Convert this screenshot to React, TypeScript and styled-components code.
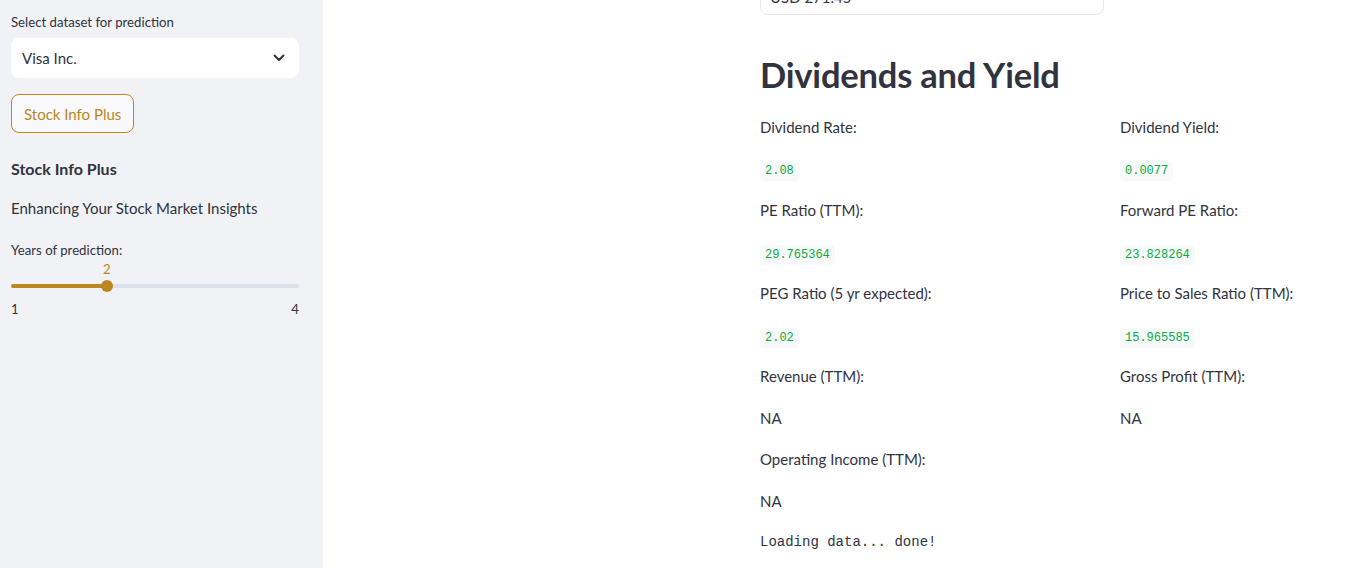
import React from "react";
import styled, { createGlobalStyle } from "styled-components";

const Global = createGlobalStyle`
  html, body { margin: 0; padding: 0; background: #ffffff; overflow: hidden; }
  body { font-family: "Lato", "Open Sans", sans-serif; color: rgb(49, 51, 63); }
  #root { height: 568px; }
`;

const GOLD = "rgb(186, 135, 33)";
const TEXT = "rgb(49, 51, 63)";

const Page = styled.div`
  display: flex;
  width: 1345px;
  height: 568px;
`;

const Sidebar = styled.aside`
  width: 323px;
  flex: none;
  background: rgb(240, 242, 246);
  padding: 11px 24px 0 11px;
  box-sizing: border-box;
  display: flex;
  flex-direction: column;
`;

const SmallLabel = styled.div`
  font-size: 13.2px;
  line-height: 22px;
  color: ${TEXT};
`;

const Select = styled.div`
  margin-top: 5px;
  height: 40px;
  background: #ffffff;
  border-radius: 8px;
  display: flex;
  align-items: center;
  justify-content: space-between;
  padding: 0 14px 0 11px;
  font-size: 15px;
  color: ${TEXT};
`;

const Button = styled.button`
  margin-top: 16px;
  align-self: flex-start;
  height: 39px;
  padding: 0 12px;
  border: 1px solid ${GOLD};
  border-radius: 8px;
  background: rgb(249, 249, 251);
  color: ${GOLD};
  font-family: inherit;
  font-size: 15px;
`;

const SideTitle = styled.div`
  margin-top: 22px;
  font-size: 16px;
  font-weight: 700;
  line-height: 28px;
  color: ${TEXT};
`;

const SideText = styled.div`
  margin-top: 12px;
  font-size: 15px;
  line-height: 26px;
  color: ${TEXT};
`;

const SliderBlock = styled.div`
  margin-top: 18px;
  display: flex;
  flex-direction: column;
`;

const SliderValue = styled.div<{ $pct: number }>`
  font-size: 13.2px;
  line-height: 18px;
  color: ${GOLD};
  padding-left: calc(${(p) => p.$pct}% - 4px);
  margin-top: -1px;
`;

const Track = styled.div`
  position: relative;
  height: 4px;
  margin-top: 6px;
  border-radius: 2px;
  background: rgb(220, 224, 232);
`;

const Fill = styled.div`
  position: absolute;
  left: 0;
  top: 0;
  height: 4px;
  border-radius: 2px;
  background: ${GOLD};
`;

const Thumb = styled.div`
  position: absolute;
  top: -4px;
  width: 12px;
  height: 12px;
  margin-left: -6px;
  border-radius: 50%;
  background: ${GOLD};
`;

const Ticks = styled.div`
  display: flex;
  justify-content: space-between;
  margin-top: 11px;
  font-size: 13.2px;
  line-height: 20px;
  color: ${TEXT};
`;

const Main = styled.main`
  flex: 1;
  padding-left: 437px;
  display: flex;
  flex-direction: column;
  overflow: hidden;
`;

const MetricBox = styled.div`
  width: 344px;
  height: 33px;
  margin-top: -18px;
  box-sizing: border-box;
  border: 1px solid rgb(230, 232, 236);
  border-radius: 8px;
  padding: 8px 9px;
  font-size: 15px;
  color: ${TEXT};
  line-height: 12px;
`;

const Heading = styled.h2`
  margin: 37px 0 16.5px 0;
  font-size: 34.5px;
  line-height: 46px;
  font-weight: 700;
  color: rgb(49, 51, 63);
  letter-spacing: -0.2px;
`;

const Grid = styled.div`
  display: grid;
  grid-template-columns: 344px 344px;
  column-gap: 16px;
  row-gap: 16px;
`;

const Cell = styled.div`
  font-size: 15px;
  line-height: 25.6px;
  height: 25.6px;
  color: ${TEXT};
  display: flex;
  align-items: center;
`;

const Code = styled.code`
  font-family: "Liberation Mono", "DejaVu Sans Mono", monospace;
  font-size: 12px;
  line-height: 20px;
  padding: 0 5px;
  margin-top: 5px;
  border-radius: 4px;
  background: rgb(248, 249, 251);
  color: rgb(9, 171, 59);
`;

const Mono = styled.div`
  margin-top: 16px;
  font-family: "Liberation Mono", "DejaVu Sans Mono", monospace;
  font-size: 14px;
  line-height: 25.6px;
  color: ${TEXT};
`;

type Item = { label: string; value: string; code: boolean };

const rows: Item[][] = [
  [
    { label: "Dividend Rate:", value: "2.08", code: true },
    { label: "Dividend Yield:", value: "0.0077", code: true },
  ],
  [
    { label: "PE Ratio (TTM):", value: "29.765364", code: true },
    { label: "Forward PE Ratio:", value: "23.828264", code: true },
  ],
  [
    { label: "PEG Ratio (5 yr expected):", value: "2.02", code: true },
    { label: "Price to Sales Ratio (TTM):", value: "15.965585", code: true },
  ],
  [
    { label: "Revenue (TTM):", value: "NA", code: false },
    { label: "Gross Profit (TTM):", value: "NA", code: false },
  ],
  [{ label: "Operating Income (TTM):", value: "NA", code: false }],
];

const Chevron = () => (
  <svg width="12" height="8" viewBox="0 0 12 8" fill="none">
    <path d="M1.5 1.5 L6 6 L10.5 1.5" stroke="rgb(49,51,63)" strokeWidth="2" strokeLinecap="round" strokeLinejoin="round" />
  </svg>
);

export default function App() {
  const pct = 33.333;
  return (
    <>
      <Global />
      <Page>
        <Sidebar>
          <SmallLabel>Select dataset for prediction</SmallLabel>
          <Select>
            <span>Visa Inc.</span>
            <Chevron />
          </Select>
          <Button>Stock Info Plus</Button>
          <SideTitle>Stock Info Plus</SideTitle>
          <SideText>Enhancing Your Stock Market Insights</SideText>
          <SliderBlock>
            <SmallLabel>Years of prediction:</SmallLabel>
            <SliderValue $pct={pct}>2</SliderValue>
            <Track>
              <Fill style={{ width: `${pct}%` }} />
              <Thumb style={{ left: `${pct}%` }} />
            </Track>
            <Ticks>
              <span>1</span>
              <span>4</span>
            </Ticks>
          </SliderBlock>
        </Sidebar>
        <Main>
          <MetricBox>USD 271.45</MetricBox>
          <Heading>Dividends and Yield</Heading>
          <Grid>
            {rows.map((row, i) => (
              <React.Fragment key={i}>
                <Cell>{row[0].label}</Cell>
                <Cell>{row[1] ? row[1].label : null}</Cell>
                <Cell>{row[0].code ? <Code>{row[0].value}</Code> : row[0].value}</Cell>
                <Cell>{row[1] ? (row[1].code ? <Code>{row[1].value}</Code> : row[1].value) : null}</Cell>
              </React.Fragment>
            ))}
          </Grid>
          <Mono>Loading data... done!</Mono>
        </Main>
      </Page>
    </>
  );
}
